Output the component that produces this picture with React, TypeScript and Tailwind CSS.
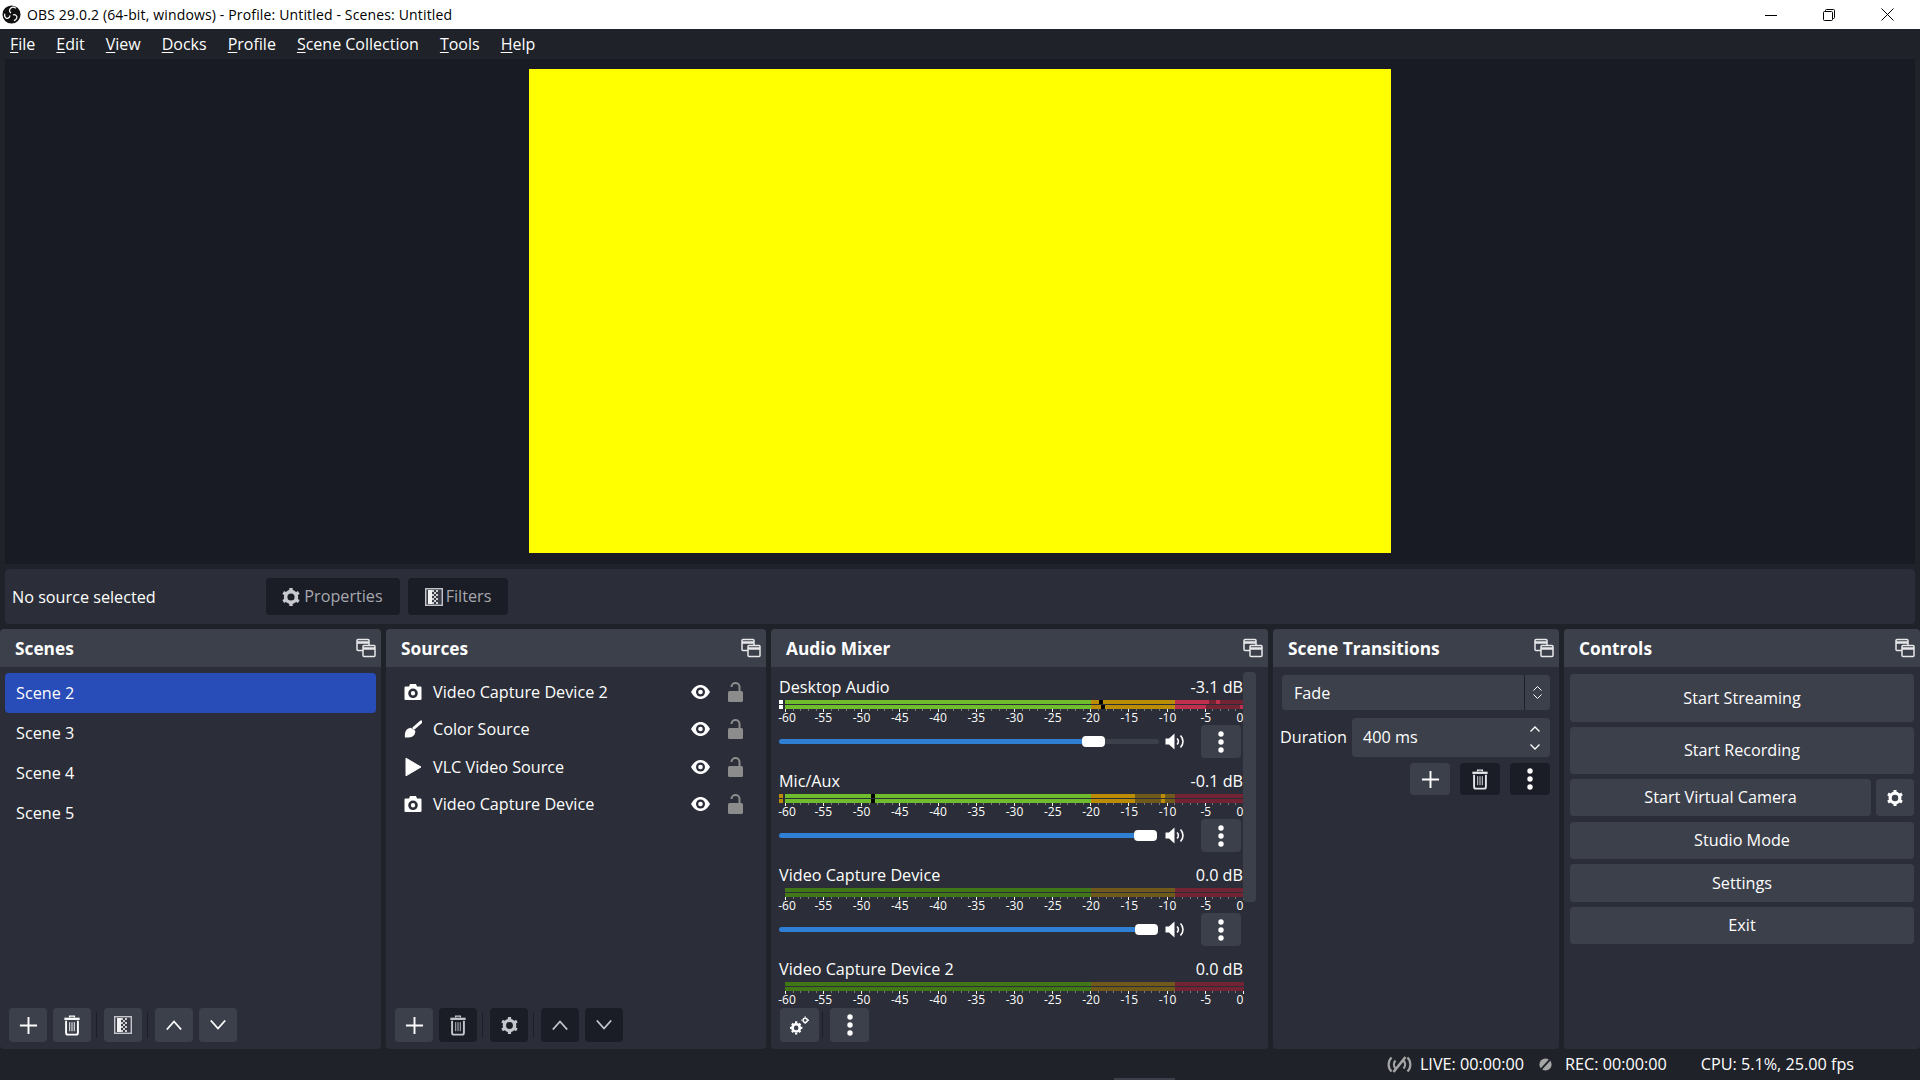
import type { ReactNode } from 'react'

const font = { fontFamily: '"Open Sans", "Noto Sans", sans-serif' }

function ObsLogo() {
  return (
    <svg viewBox="0 0 20 20" className="w-[19px] h-[19px] shrink-0" fill="none" stroke="#fff" strokeWidth="1.300">
      <circle cx="10" cy="10" r="9.500" fill="#111" stroke="none" />
      <circle cx="10" cy="10" r="1.600" fill="#111" stroke="none" />
      <path d="M9.500 8.500C7 7 7.500 3.500 10.500 2.500c1.500-.4 3 0 4 1" />
      <path d="M8.500 11C8 14 5 15 3.500 13c-.8-1.200-1-2.500-.5-3.800" />
      <path d="M11.500 10.500C14 9.500 16.500 11.500 15.500 14c-.6 1.300-1.600 2.200-3 2.500" />
    </svg>
  )
}

function DockIcon() {
  return (
    <svg viewBox="0 0 20 20" className="w-5 h-5" fill="none" stroke="#e8e8ea" strokeWidth="1.500">
      <rect x="1" y="1.500" width="12" height="11" rx="1" />
      <path d="M1 4.500h12" strokeWidth="2.400" />
      <rect x="7" y="7.500" width="12" height="11" rx="1" fill="#3c404b" />
      <path d="M7 10.500h12" strokeWidth="2.400" />
    </svg>
  )
}

function Plus() {
  return (
    <svg viewBox="0 0 20 20" className="w-[19px] h-[19px]" stroke="#fefefe" strokeWidth="2">
      <path d="M10 1v18M1 10h18" />
    </svg>
  )
}

function Trash({ color = '#fefefe' }: { color?: string }) {
  return (
    <svg viewBox="0 0 18 22" className="w-[18px] h-[21px]" fill="none" stroke={color}>
      <path d="M1 4h16" strokeWidth="2.400" />
      <path d="M6.500 2.600V1.200h5v1.400" strokeWidth="1.400" />
      <path d="M2.800 6v12.600a2 2 0 0 0 2 2h8.400a2 2 0 0 0 2-2V6" strokeWidth="2" />
      <path d="M6.600 7.500v9.500M9 7.500v9.500M11.400 7.500v9.500" strokeWidth="1" />
    </svg>
  )
}

function FilterIcon() {
  return (
    <svg viewBox="0 0 18 18" className="w-[18px] h-[18px]">
      <rect x="0.700" y="0.700" width="16.600" height="16.600" fill="#3a3d47" stroke="#c4c6cc" strokeWidth="1.400" />
      <rect x="3" y="2" width="4" height="14" fill="#f2f2f2" />
      <path d="M7 2h2v2H7zM9 4h2v2H9zM7 6h2v2H7zM9 8h2v2H9zM7 10h2v2H7zM9 12h2v2H9zM7 14h2v2H7zM11 2h2v2h-2zM11 6h2v2h-2zM11 10h2v2h-2zM11 14h2v2h-2z" fill="#cfcfcf" />
    </svg>
  )
}

function Gear({ color = '#fefefe', className = 'w-[19px] h-[21px]' }: { color?: string; className?: string }) {
  return (
    <svg viewBox="0 0 20 20" className={className} fill="none" stroke={color}>
      <circle cx="10" cy="10" r="5.400" strokeWidth="3.600" />
      <path d="M10 1v3M10 16v3M2.200 5.500l2.600 1.500M15.200 13l2.600 1.500M2.200 14.500l2.600-1.500M15.200 7l2.600-1.500" strokeWidth="3.400" />
    </svg>
  )
}

function Chevron({ up, color = '#fefefe' }: { up?: boolean; color?: string }) {
  return (
    <svg viewBox="0 0 16 10" className="w-4 h-[10px]" fill="none" stroke={color} strokeWidth="1.800">
      <path d={up ? 'M0.800 9.500 8 1.500l7.200 8' : 'M0.800 0.500 8 8.500l7.200-8'} />
    </svg>
  )
}

function Dots() {
  return (
    <svg viewBox="0 0 6 22" className="w-[6px] h-[22px]" fill="#fefefe">
      <circle cx="3" cy="3" r="2.700" />
      <circle cx="3" cy="11" r="2.700" />
      <circle cx="3" cy="19" r="2.700" />
    </svg>
  )
}

function Speaker() {
  return (
    <svg viewBox="0 0 20 17" className="w-5 h-[17px]" fill="none" stroke="#fefefe">
      <path d="M0.500 5.500h3.500L9.500 0.500v16L4 11.500H0.500Z" fill="#fefefe" stroke="none" />
      <path d="M12 5.500a4 4 0 0 1 0 6" strokeWidth="1.600" />
      <path d="M15.500 2.500a8.500 8.500 0 0 1 0 12" strokeWidth="1.600" />
    </svg>
  )
}

function Eye() {
  return (
    <svg viewBox="0 0 19 14" className="w-[19px] h-[14px]">
      <path d="M0 7C2.500 2.500 5.800 0 9.500 0S16.500 2.500 19 7c-2.500 4.500-5.800 7-9.500 7S2.500 11.500 0 7Z" fill="#fefefe" />
      <circle cx="9.500" cy="7" r="4.500" fill="#2b2e38" />
      <circle cx="9.500" cy="7" r="2.300" fill="#fefefe" />
    </svg>
  )
}

function Lock() {
  return (
    <svg viewBox="0 0 15 20" className="w-[15px] h-5">
      <rect x="0" y="9" width="15" height="11" rx="1.500" fill="#8c8c8c" />
      <path d="M3.500 9V5a4 4 0 0 1 8 0v4" fill="none" stroke="#8c8c8c" strokeWidth="2" />
      <path d="M2 5h3v4H2z" fill="#2b2e38" />
    </svg>
  )
}

function Camera() {
  return (
    <svg viewBox="0 0 18 18" className="w-[18px] h-[18px]">
      <path fillRule="evenodd" fill="#fefefe" d="M6 1h6l1 2.500h3.500a1 1 0 0 1 1 1V16a1 1 0 0 1-1 1h-15a1 1 0 0 1-1-1V4.500a1 1 0 0 1 1-1H5ZM9 5.500a4.800 4.800 0 1 0 0 9.600 4.800 4.800 0 0 0 0-9.600Zm0 2.600a2.200 2.200 0 1 1 0 4.400 2.200 2.200 0 0 1 0-4.400Z" />
    </svg>
  )
}

function Brush() {
  return (
    <svg viewBox="0 0 20 20" className="w-[19px] h-[19px]" fill="#fefefe">
      <path d="M19 1.500 11 8.500" stroke="#fefefe" strokeWidth="3.200" strokeLinecap="round" />
      <path d="M7.500 8C4 8.500 1 11 1 16v3h4c5 0 8-3.500 7.500-7.500Z" />
    </svg>
  )
}

function Play() {
  return (
    <svg viewBox="0 0 18 20" className="w-[18px] h-5" fill="#fefefe">
      <path d="M2 1.200 17 10 2 18.800Z" stroke="#fefefe" strokeLinejoin="round" />
    </svg>
  )
}

function ToolButton({ children, dark, className = 'w-[38px] h-[34px]' }: { children: ReactNode; dark?: boolean; className?: string }) {
  return (
    <button className={`shrink-0 rounded-[4px] flex items-center justify-center ${dark ? 'bg-[#1a1c26]' : 'bg-[#3c404b]'} ${className}`}>
      {children}
    </button>
  )
}

function Separator({ className = 'ml-[5px] mr-[7px]' }: { className?: string }) {
  return <div className={`w-px h-[26px] mt-1 bg-[#1d1f26] shrink-0 ${className}`} />
}

function Dock({ title, className, children }: { title: string; className: string; children: ReactNode }) {
  return (
    <section className={`flex flex-col rounded-[4px] bg-[#2b2e38] overflow-hidden ${className}`}>
      <header className="h-[38px] shrink-0 bg-[#3c404b] flex items-center justify-between pl-[15px] pr-[5px]">
        <h2 className="text-[17.300px] font-bold text-[#fefefe] pt-[1px]">{title}</h2>
        <DockIcon />
      </header>
      {children}
    </section>
  )
}

type Segment = [number, number, string]

const GREEN = '#6fbc2c'
const YELLOW = '#bb8d07'
const RED = '#c12f4e'
const DIM_GREEN = '#417717'
const DIM_YELLOW = '#6f5a1c'
const DIM_RED = '#722434'

const idleRow: Segment[] = [
  [0, 306, DIM_GREEN],
  [306, 390, DIM_YELLOW],
  [390, 459, DIM_RED],
]

interface Channel {
  name: string
  db: string
  top: Segment[]
  bottom: Segment[]
  peaks?: [number, number]
  clip?: string
  volume?: number
  showDim?: boolean
}

const channels: Channel[] = [
  {
    name: 'Desktop Audio',
    db: '-3.1 dB',
    clip: '#ffffff',
    peaks: [314, 316],
    top: [
      [0, 306, GREEN],
      [306, 390, YELLOW],
      [390, 424, RED],
      [424, 431, DIM_RED],
      [431, 435, RED],
      [435, 459, DIM_RED],
    ],
    bottom: [
      [0, 306, GREEN],
      [306, 390, YELLOW],
      [390, 421, RED],
      [421, 455, DIM_RED],
      [455, 459, RED],
    ],
    volume: 303,
    showDim: true,
  },
  {
    name: 'Mic/Aux',
    db: '-0.1 dB',
    clip: YELLOW,
    peaks: [86, 86],
    top: [
      [0, 306, GREEN],
      [306, 350, YELLOW],
      [350, 376, DIM_YELLOW],
      [376, 380, YELLOW],
      [380, 390, DIM_YELLOW],
      [390, 459, DIM_RED],
    ],
    bottom: [
      [0, 306, GREEN],
      [306, 350, YELLOW],
      [350, 376, DIM_YELLOW],
      [376, 380, YELLOW],
      [380, 390, DIM_YELLOW],
      [390, 459, DIM_RED],
    ],
    volume: 355,
  },
  {
    name: 'Video Capture Device',
    db: '0.0 dB',
    top: idleRow,
    bottom: idleRow,
    volume: 356,
  },
  {
    name: 'Video Capture Device 2',
    db: '0.0 dB',
    top: idleRow,
    bottom: idleRow,
  },
]

const scaleLabels = ['-60', '-55', '-50', '-45', '-40', '-35', '-30', '-25', '-20', '-15', '-10', '-5', '0']

function Meter({ channel }: { channel: Channel }) {
  const minor = Array.from({ length: 61 }, (_, i) => i)
  return (
    <svg width="466" height="12" viewBox="0 0 466 12" className="block shrink-0">
      {channel.clip && (
        <>
          <rect x="0" y="0" width="4" height="4" fill={channel.clip} />
          <rect x="0" y="5" width="4" height="4" fill={channel.clip} />
        </>
      )}
      {channel.top.map(([from, to, color]) => (
        <rect key={`t${from}`} x={6 + from} y="0" width={to - from} height="4" fill={color} />
      ))}
      {channel.bottom.map(([from, to, color]) => (
        <rect key={`b${from}`} x={6 + from} y="5" width={to - from} height="4" fill={color} />
      ))}
      {channel.peaks && (
        <>
          <rect x={6 + channel.peaks[0]} y="0" width="4" height="4" fill="#000" />
          <rect x={6 + channel.peaks[1]} y="5" width="4" height="4" fill="#000" />
        </>
      )}
      {minor.map((i) => (
        <rect
          key={i}
          x={6 + Math.round(i * 7.633)}
          y="9"
          width="1"
          height={i % 5 === 0 ? 3 : 2}
          fill={i % 5 === 0 ? '#f4f4f4' : '#77797f'}
        />
      ))}
    </svg>
  )
}

function MixerStrip({ channel }: { channel: Channel }) {
  return (
    <div className="flex flex-col h-[94px] shrink-0">
      <div className="flex justify-between items-center h-[26px] text-[16.200px] text-[#fefefe] pr-[1px]">
        <span>{channel.name}</span>
        <span>{channel.db}</span>
      </div>
      <Meter channel={channel} />
      <div className="flex justify-between w-[459px] ml-[6px] text-[12px] leading-[12px] text-[#fefefe] h-[12px]">
        {scaleLabels.map((label) => (
          <span
            key={label}
            className={`w-0 flex justify-center whitespace-nowrap ${label === '-60' ? 'translate-x-[2px]' : ''} ${label === '0' ? '-translate-x-[4px]' : ''}`}
          >
            {label}
          </span>
        ))}
      </div>
      {channel.volume && (
        <div className="flex items-center mt-[1px] h-[33px]">
          <div className="flex items-center w-[380px]">
            <div className="h-[5px] rounded-l-full bg-[#2f7fd4] shrink-0" style={{ width: channel.volume }} />
            <div className="h-[11px] w-[23px] rounded-[4px] bg-white shrink-0" />
            {channel.showDim && <div className="h-[5px] flex-1 rounded-r-full bg-[#3c404b]" />}
          </div>
          <div className="ml-[6px] w-5 flex justify-center">
            <Speaker />
          </div>
          <button className="ml-[16px] w-10 h-[33px] rounded-[4px] bg-[#3c404b] flex items-center justify-center">
            <Dots />
          </button>
        </div>
      )}
    </div>
  )
}

function ControlButton({ label, className }: { label: string; className: string }) {
  return (
    <button className={`rounded-[4px] bg-[#3c404b] text-[16.200px] text-[#fefefe] ${className}`}>{label}</button>
  )
}

const menus = ['File', 'Edit', 'View', 'Docks', 'Profile', 'Scene Collection', 'Tools', 'Help']
const scenes = ['Scene 2', 'Scene 3', 'Scene 4', 'Scene 5']

const sources: { name: string; icon: ReactNode }[] = [
  { name: 'Video Capture Device 2', icon: <Camera /> },
  { name: 'Color Source', icon: <Brush /> },
  { name: 'VLC Video Source', icon: <Play /> },
  { name: 'Video Capture Device', icon: <Camera /> },
]

export default function App() {
  return (
    <div className="w-[1920px] h-[1080px] flex flex-col overflow-hidden bg-[#1f2229] relative" style={font}>
      {/* Title bar */}
      <div className="h-[29px] shrink-0 bg-white flex items-center justify-between">
        <div className="flex items-center pl-[2px] gap-[6px]">
          <ObsLogo />
          <span className="text-[14px] text-black tracking-[0.15px]">
            OBS 29.0.2 (64-bit, windows) - Profile: Untitled - Scenes: Untitled
          </span>
        </div>
        <div className="flex items-center text-black pr-[4px]">
          <div className="w-[58px] flex justify-center">
            <svg width="12" height="12" viewBox="0 0 12 12" stroke="#000">
              <path d="M0 6.500h12" />
            </svg>
          </div>
          <div className="w-[58px] flex justify-center">
            <svg width="12" height="12" viewBox="0 0 12 12" fill="none" stroke="#000">
              <rect x="0.500" y="2.500" width="9" height="9" rx="1" />
              <path d="M2.500 2.500V1.500a1 1 0 0 1 1-1h7a1 1 0 0 1 1 1v7a1 1 0 0 1-1 1h-1" />
            </svg>
          </div>
          <div className="w-[58px] flex justify-center">
            <svg width="13" height="13" viewBox="0 0 13 13" stroke="#000">
              <path d="M0.500 0.500l12 12M12.500 0.500l-12 12" />
            </svg>
          </div>
        </div>
      </div>

      {/* Menu bar */}
      <nav className="h-[30px] shrink-0 flex items-center pl-[10px] gap-[21px] text-[16px] text-[#fefefe]">
        {menus.map((menu) => (
          <span key={menu}>
            <span className="underline underline-offset-2">{menu[0]}</span>
            {menu.slice(1)}
          </span>
        ))}
      </nav>

      {/* Preview */}
      <div className="h-[505px] shrink-0 mx-[5px] pb-[2px] bg-[#181a24] flex items-center justify-center">
        <div className="w-[862px] h-[484px] bg-[#ffff00]" />
      </div>

      {/* Context bar */}
      <div className="h-[55px] mt-[5px] mx-[5px] shrink-0 rounded-[4px] bg-[#2b2e38] flex items-center pl-[7px] text-[16.200px]">
        <span className="w-[254px] text-[#fefefe] pt-[1px]">No source selected</span>
        <button className="w-[134px] h-[37px] pr-[2px] rounded-[4px] bg-[#1a1c26] flex items-center justify-center gap-[3px] text-[#a6a8ae]">
          <Gear color="#c8c9ce" className="w-5 h-5" />
          Properties
        </button>
        <button className="ml-2 w-[100px] h-[37px] rounded-[4px] bg-[#1a1c26] flex items-center justify-center gap-[3px] text-[#a6a8ae]">
          <FilterIcon />
          Filters
        </button>
      </div>

      {/* Docks */}
      <div className="h-[420px] mt-[5px] shrink-0 flex gap-[5px]">
        <Dock title="Scenes" className="w-[381px] shrink-0">
          <div className="flex-1 flex flex-col pt-[6px] pl-[5px] pr-[5px] text-[16.200px] text-[#fefefe]">
            {scenes.map((scene, i) => (
              <div
                key={scene}
                className={`h-10 shrink-0 flex items-center pl-[11px] rounded-[4px] ${i === 0 ? 'bg-[#284cb8]' : ''}`}
              >
                {scene}
              </div>
            ))}
          </div>
          <div className="h-[41px] shrink-0 flex items-start pl-[9px]">
            <ToolButton><Plus /></ToolButton>
            <div className="w-[6px]" />
            <ToolButton><Trash /></ToolButton>
            <Separator />
            <ToolButton><FilterIcon /></ToolButton>
            <Separator />
            <ToolButton><Chevron up /></ToolButton>
            <div className="w-[6px]" />
            <ToolButton><Chevron /></ToolButton>
          </div>
        </Dock>

        <Dock title="Sources" className="w-[380px] shrink-0">
          <div className="flex-1 flex flex-col pt-[6px] text-[16.200px] text-[#fefefe]">
            {sources.map((source) => (
              <div key={source.name} className="h-[37.500px] shrink-0 flex items-center pl-[18px]">
                <div className="w-[18px] flex justify-center">{source.icon}</div>
                <span className="ml-[11px] w-[258px]">{source.name}</span>
                <Eye />
                <div className="ml-[18px]">
                  <Lock />
                </div>
              </div>
            ))}
          </div>
          <div className="h-[41px] shrink-0 flex items-start pl-[9px]">
            <ToolButton><Plus /></ToolButton>
            <div className="w-[6px]" />
            <ToolButton dark><Trash color="#c4c6cc" /></ToolButton>
            <Separator />
            <ToolButton dark><Gear color="#c4c6cc" /></ToolButton>
            <Separator />
            <ToolButton dark><Chevron up color="#c4c6cc" /></ToolButton>
            <div className="w-[6px]" />
            <ToolButton dark><Chevron color="#c4c6cc" /></ToolButton>
          </div>
        </Dock>

        <Dock title="Audio Mixer" className="w-[497px] shrink-0">
          <div className="flex-1 flex pl-[8px] pt-[7px] overflow-hidden">
            <div className="w-[465px] shrink-0 flex flex-col">
              {channels.map((channel) => (
                <MixerStrip key={channel.name} channel={channel} />
              ))}
            </div>
            <div className="-mt-[2px] ml-[-1px] w-[13px] h-[230px] rounded-[4px] bg-[#3c404b] shrink-0" />
          </div>
          <div className="h-[41px] shrink-0 flex items-start pl-[9px]">
            <ToolButton className="w-[39px] h-[34px]">
              <svg viewBox="0 0 22 20" className="w-[21px] h-[19px]" fill="none" stroke="#fefefe">
                <circle cx="7.500" cy="12.500" r="3.800" strokeWidth="2.800" />
                <path d="M7.500 5.500v2M7.500 17.500v2M1 12.500h2M12 12.500h2M3 8l1.400 1.400M10.600 15.600 12 17M3 17l1.400-1.400M10.600 9.400 12 8" strokeWidth="2.400" />
                <circle cx="17" cy="4.500" r="2.200" strokeWidth="1.500" />
                <path d="M17 0.500v1M17 7.500v1M13 4.500h1M20 4.500h1" strokeWidth="1.500" />
              </svg>
            </ToolButton>
            <Separator className="ml-[3px] mr-[7px]" />
            <ToolButton className="w-[39px] h-[34px]"><Dots /></ToolButton>
          </div>
        </Dock>

        <Dock title="Scene Transitions" className="w-[286px] shrink-0">
          <div className="flex-1 flex flex-col pl-[7px] pr-[9px] pt-[8px] text-[16.200px] text-[#fefefe]">
            <div className="ml-[2px] h-[35px] rounded-[4px] bg-[#3c404b] flex items-center">
              <span className="flex-1 pl-[12px] pt-[1px]">Fade</span>
              <div className="w-[26px] h-full border-l border-[#1d1f26] flex flex-col items-center justify-center gap-[3px]">
                <svg width="9" height="5" viewBox="0 0 9 5" fill="none" stroke="#fefefe"><path d="M.5 4.500 4.500.5l4 4" /></svg>
                <svg width="9" height="5" viewBox="0 0 9 5" fill="none" stroke="#fefefe"><path d="M.5.5l4 4 4-4" /></svg>
              </div>
            </div>
            <div className="mt-[8px] flex items-center">
              <span className="w-[72px]">Duration</span>
              <div className="flex-1 h-[39px] rounded-[4px] bg-[#3c404b] flex items-center pl-[11px] pr-[10px] justify-between">
                <span>400 ms</span>
                <div className="flex flex-col gap-[12px]">
                  <svg width="10" height="6" viewBox="0 0 10 6" fill="none" stroke="#fefefe" strokeWidth="1.300"><path d="M.5 5.500 5 1l4.500 4.500" /></svg>
                  <svg width="10" height="6" viewBox="0 0 10 6" fill="none" stroke="#fefefe" strokeWidth="1.300"><path d="M.5.500 5 5 9.500.500" /></svg>
                </div>
              </div>
            </div>
            <div className="mt-[6px] flex justify-end gap-[10px]">
              <ToolButton className="w-10 h-[32px]"><Plus /></ToolButton>
              <ToolButton dark className="w-10 h-[32px]"><Trash color="#e4e5e8" /></ToolButton>
              <ToolButton dark className="w-10 h-[32px]"><Dots /></ToolButton>
            </div>
          </div>
        </Dock>

        <Dock title="Controls" className="flex-1">
          <div className="flex-1 flex flex-col pl-[6px] pr-[6px] pt-[7px] gap-[5px]">
            <ControlButton label="Start Streaming" className="h-[48px] shrink-0" />
            <ControlButton label="Start Recording" className="h-[47px] shrink-0" />
            <div className="flex gap-[5px] h-[37px] shrink-0">
              <ControlButton label="Start Virtual Camera" className="flex-1" />
              <button className="w-[38px] rounded-[4px] bg-[#3c404b] flex items-center justify-center">
                <Gear className="w-[18px] h-[18px]" />
              </button>
            </div>
            <ControlButton label="Studio Mode" className="mt-[1px] h-[37px] shrink-0" />
            <ControlButton label="Settings" className="h-[38px] shrink-0" />
            <ControlButton label="Exit" className="h-[37px] shrink-0" />
          </div>
        </Dock>
      </div>

      {/* Status bar */}
      <footer className="flex-1 flex items-center justify-end pr-[66px] text-[16.200px] text-[#fefefe]">
        <svg viewBox="0 0 25 17" className="w-[25px] h-[17px]" fill="none" stroke="#a6a6a6" strokeWidth="2.200">
          <path d="M4.500 1.500a10 10 0 0 0 0 14M8.500 4.500a6 6 0 0 0 0 8M20.500 1.500a10 10 0 0 1 0 14M16.500 4.500a6 6 0 0 1 0 8" />
          <path d="M18.500 1 6.500 16" strokeWidth="2.600" />
        </svg>
        <span className="ml-[8px]">LIVE: 00:00:00</span>
        <svg viewBox="0 0 16 16" className="ml-[14px] w-[15px] h-[15px]">
          <circle cx="8" cy="8" r="6.500" fill="#a6a6a6" />
          <path d="M14.500 1 1.500 15" stroke="#1f2229" strokeWidth="2" />
        </svg>
        <span className="ml-[12px]">REC: 00:00:00</span>
        <span className="ml-[34px]">CPU: 5.1%, 25.00 fps</span>
      </footer>

      {/* Sliver of the resize handle along the bottom edge */}
      <div className="absolute bottom-0 left-[1114px] w-[61px] h-[2px] bg-[#3c404b]" />
    </div>
  )
}
